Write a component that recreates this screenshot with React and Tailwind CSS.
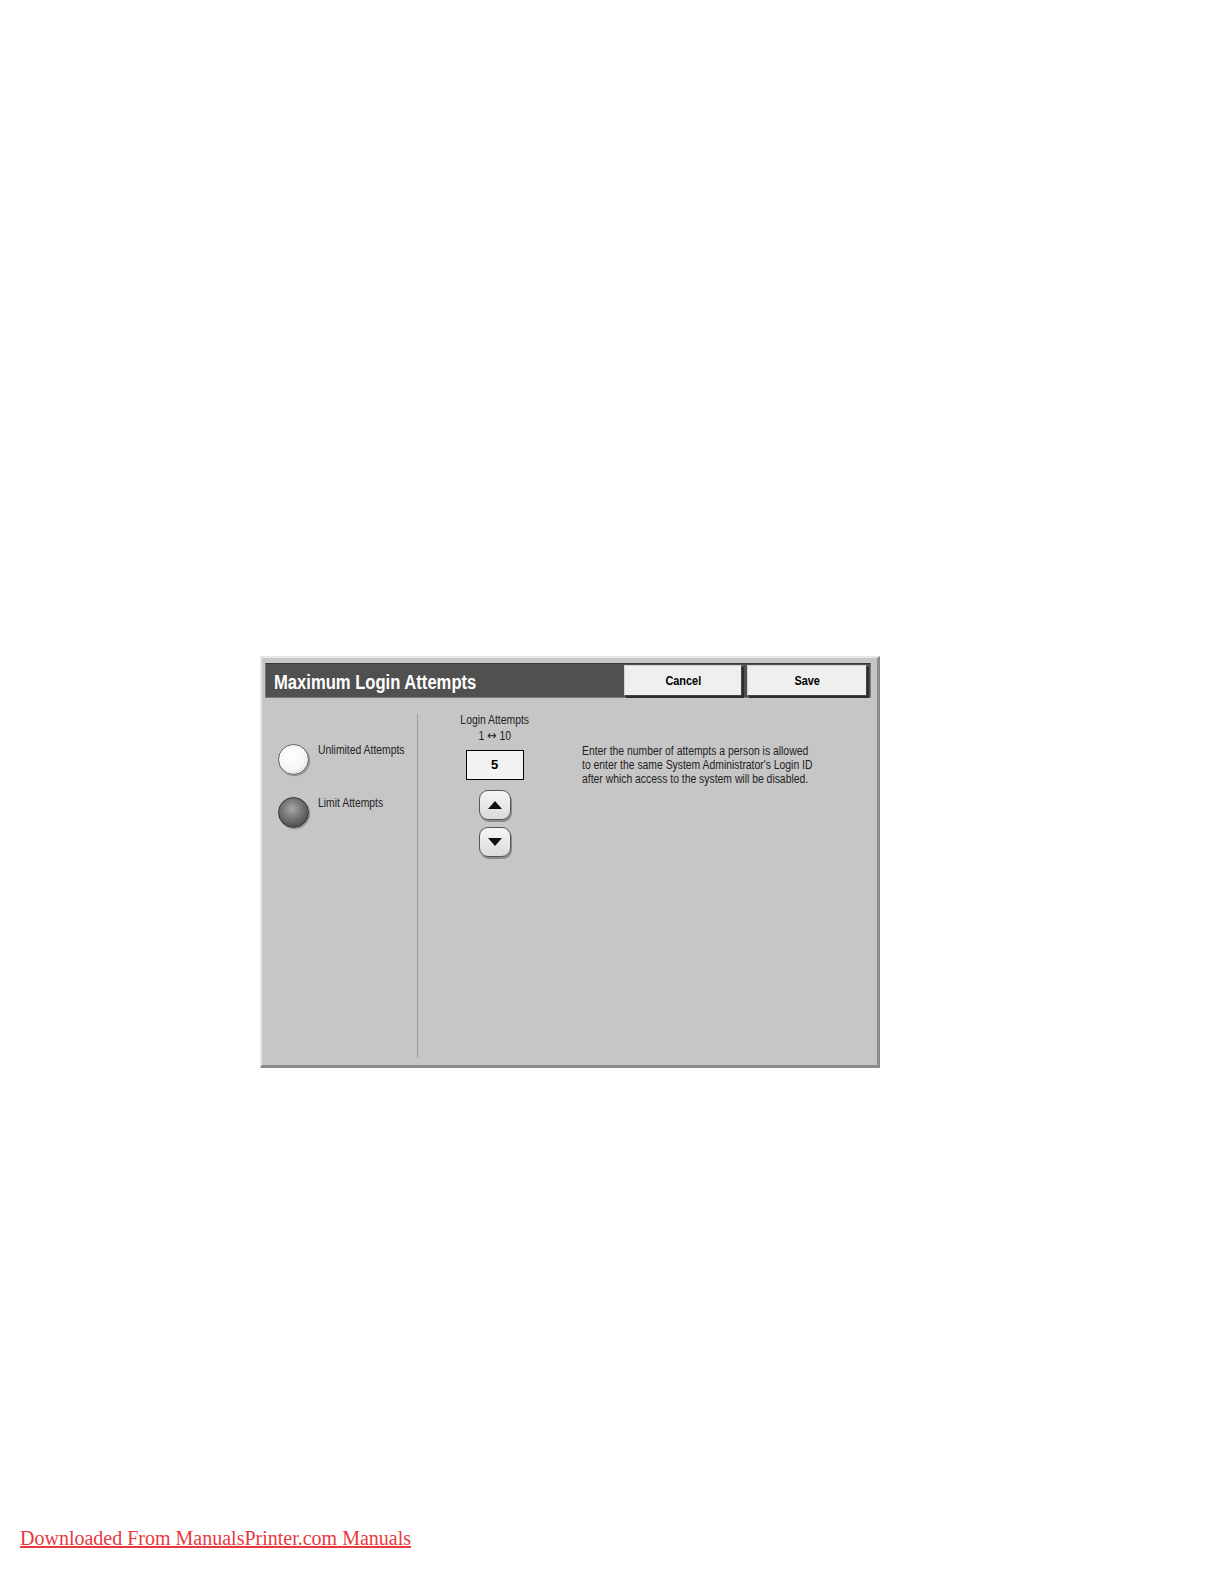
import React from 'react';

const sans = { fontFamily: '"Liberation Sans", Arial, sans-serif' };

function Narrow({ children, className = '' }) {
  return <span className={'inline-block whitespace-nowrap ' + className}>{children}</span>;
}

function Radio({ on }) {
  return on ? (
    <div className="w-[31px] h-[31px] shrink-0 rounded-full border border-[#333] bg-[radial-gradient(circle_at_45%_38%,#a8a8a8_0%,#7a7a7a_38%,#484848_82%,#3a3a3a_100%)] shadow-[1px_1px_1px_#8a8a8a]" />
  ) : (
    <div className="w-[31px] h-[31px] shrink-0 rounded-full border border-[#666] bg-[radial-gradient(circle_at_45%_40%,#ffffff_0%,#f6f6f6_55%,#d2d2d2_90%,#bdbdbd_100%)] shadow-[1px_1px_1px_#8a8a8a]" />
  );
}

function Arrow({ up }) {
  return (
    <div className="w-[32px] h-[30px] rounded-[9px] border border-[#555] bg-[linear-gradient(#f6f6f6,#dadada)] shadow-[1px_2px_0_#8a8a8a] flex items-center justify-center">
      <svg width="14" height="8" viewBox="0 0 14 8">
        {up ? <path d="M0 8 L7 0 L14 8 Z" fill="#111" /> : <path d="M0 0 L7 8 L14 0 Z" fill="#111" />}
      </svg>
    </div>
  );
}

function HeadButton({ label, w }) {
  return (
    <div className={w + ' h-[31px] bg-[#efefef] border border-[#d4d4d4] border-r-[#444] border-b-[#444] shadow-[2px_2px_0_#2e2e2e] flex items-center justify-center text-[13px] font-bold text-black'}>
      <Narrow className="scale-x-[0.84] origin-center">{label}</Narrow>
    </div>
  );
}

export default function App() {
  return (
    <div className="min-h-[1584px] bg-white relative" style={sans}>
      <div className="pt-[656px] pl-[260px]">
        <div className="w-[620px] h-[412px] bg-[#c6c6c6] border-t-2 border-l-2 border-[#e6e6e6] border-r-[3px] border-b-[3px] border-r-[#8c8c8c] border-b-[#8c8c8c] flex flex-col pt-[5px] pl-[3px]">
          <div className="h-[35px] w-[606px] bg-[#505050] border border-[#7a7a7a] border-t-[#3a3a3a] flex items-start pl-[8px] pr-[3px] pt-[1px]">
            <div className="flex-1 self-center text-white font-bold text-[20px] leading-none mt-[1px]">
              <Narrow className="scale-x-[0.83] origin-left">Maximum Login Attempts</Narrow>
            </div>
            <div className="flex gap-[5px]">
              <HeadButton label="Cancel" w="w-[118px]" />
              <HeadButton label="Save" w="w-[120px]" />
            </div>
          </div>
          <div className="flex flex-1 text-[12px] text-[#222]">
            <div className="w-[152px] flex flex-col pt-[46px] pl-[13px] gap-[22px]">
              <div className="flex items-start gap-[9px]">
                <Radio />
                <span className="leading-none"><Narrow className="scale-x-[0.865] origin-left">Unlimited Attempts</Narrow></span>
              </div>
              <div className="flex items-start gap-[9px]">
                <Radio on />
                <span className="leading-none"><Narrow className="scale-x-[0.865] origin-left">Limit Attempts</Narrow></span>
              </div>
            </div>
            <div className="w-px bg-[#9a9a9a] mt-[16px] mb-[7px]" />
            <div className="w-[153px] flex flex-col items-center pt-[15px]">
              <div className="leading-[15px] flex flex-col items-center">
                <Narrow className="scale-x-[0.865] origin-center">Login Attempts</Narrow>
                <Narrow className="scale-x-[0.865] origin-center">
                  1 <span style={{ fontFamily: '"DejaVu Sans", sans-serif' }} className="text-[13px]">↔</span> 10
                </Narrow>
              </div>
              <div className="mt-[6px] w-[58px] h-[30px] bg-[#f2f2f2] border border-black flex items-center justify-center text-[13px] font-bold text-black">
                5
              </div>
              <div className="mt-[10px] flex flex-col gap-[7px]">
                <Arrow up />
                <Arrow />
              </div>
            </div>
            <div className="pl-[11px] pt-[46px] leading-[14px] flex flex-col items-start">
              <Narrow className="scale-x-[0.865] origin-left">Enter the number of attempts a person is allowed</Narrow>
              <Narrow className="scale-x-[0.865] origin-left">to enter the same System Administrator's Login ID</Narrow>
              <Narrow className="scale-x-[0.865] origin-left">after which access to the system will be disabled.</Narrow>
            </div>
          </div>
        </div>
      </div>
      <div className="absolute left-[20px] top-[1524px] text-[20px] leading-[28px] text-[#e8383d] underline" style={{ fontFamily: '"Liberation Serif", "Times New Roman", serif' }}>
        Downloaded From ManualsPrinter.com Manuals
      </div>
    </div>
  );
}
